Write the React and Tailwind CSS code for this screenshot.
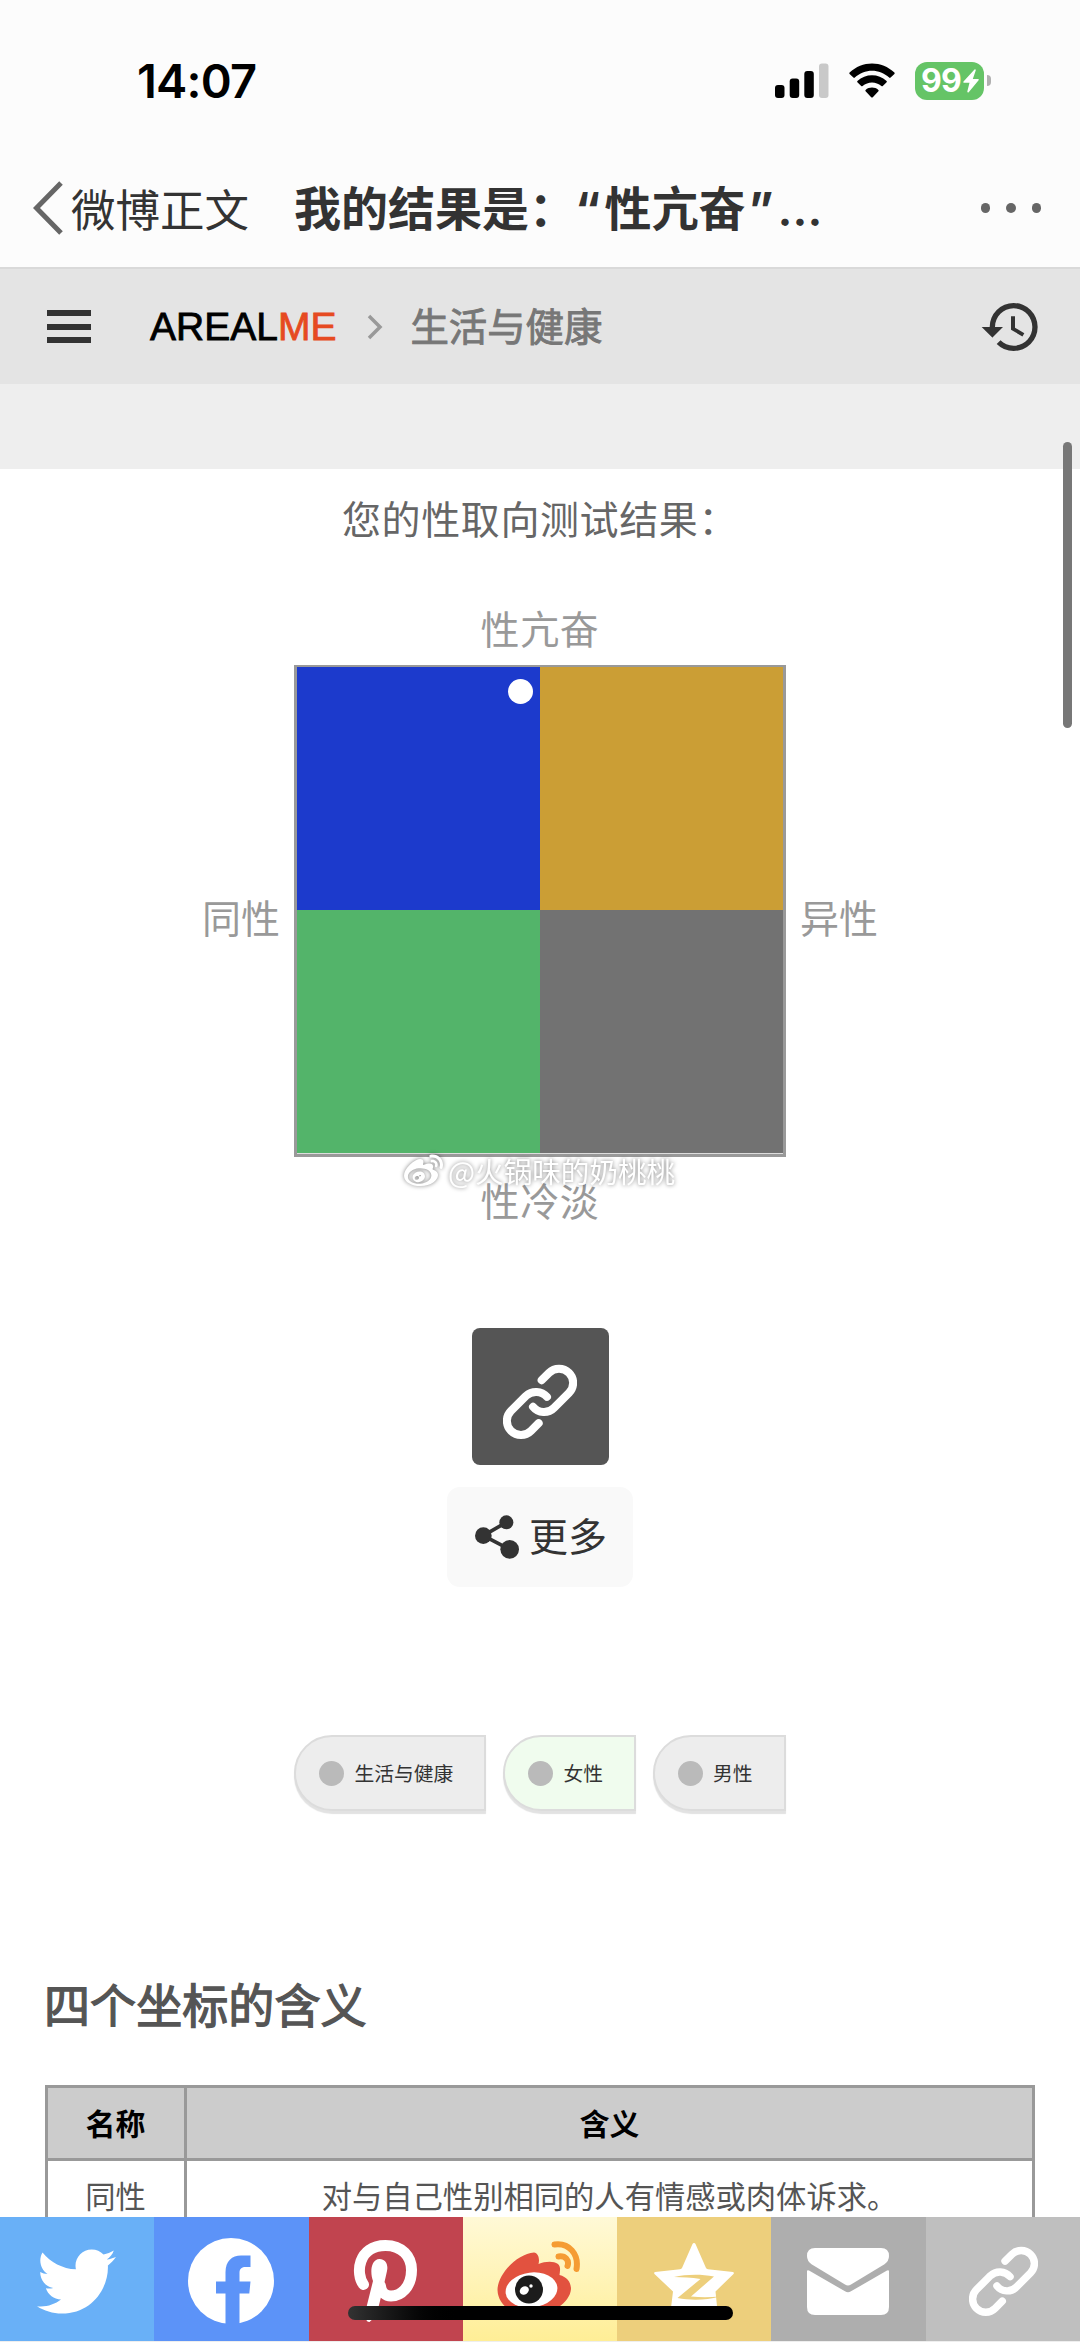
import { FaTwitter, FaWeibo } from "react-icons/fa";
import { MdHistory } from "react-icons/md";

const tags = [
  { label: "生活与健康", bg: "bg-[#ededed]" },
  { label: "女性", bg: "bg-[#f0fcee]" },
  { label: "男性", bg: "bg-[#ededed]" },
];

const rows = [{ name: "同性", meaning: "对与自己性别相同的人有情感或肉体诉求。" }];

function SignalIcon() {
  return (
    <svg width="54" height="36" viewBox="0 0 54 36">
      <rect x="0" y="22" width="9.5" height="13" rx="3" />
      <rect x="14.7" y="15.5" width="9.5" height="19.5" rx="3" />
      <rect x="29.3" y="8" width="9.5" height="27" rx="3" />
      <rect x="44" y="0.5" width="9.5" height="34.5" rx="3" fill="#c9c9c9" />
    </svg>
  );
}

function WifiIcon() {
  return (
    <svg width="46" height="36" viewBox="0 0 46 36">
      <path d="M0.6 9.6 C13 -2.6 33 -2.6 45.4 9.6 Q46 10.4 45.4 11 L41.6 14.6 Q40.9 15.2 40.2 14.6 C30.5 5.4 15.5 5.4 5.8 14.6 Q5.1 15.2 4.4 14.6 L0.6 11 Q0 10.4 0.6 9.6Z" />
      <path d="M8.4 18 C16.5 10.3 29.5 10.3 37.6 18 Q38.2 18.7 37.6 19.3 L33.8 22.9 Q33.1 23.5 32.4 22.9 C27 18.2 19 18.2 13.6 22.9 Q12.9 23.5 12.2 22.9 L8.4 19.3 Q7.8 18.7 8.4 18Z" />
      <path d="M16.6 27 C20 23.8 26 23.8 29.4 27 Q30 27.7 29.4 28.3 L23.8 34.2 Q23 35 22.2 34.2 L16.6 28.3 Q16 27.7 16.6 27Z" />
    </svg>
  );
}

function BoltIcon() {
  return (
    <svg width="16" height="24" viewBox="0 0 16 24" fill="#fff">
      <path d="M11.5 0.5 L0.5 12.5 Q0 13.8 1.2 13.8 H6.5 L4.3 22.5 Q4.5 24 5.7 23.2 L15.6 11.3 Q16.3 10 15 10 H9.8 L12.8 1.3 Q12.6 -0.3 11.5 0.5Z" />
    </svg>
  );
}

function LinkIcon({ className }) {
  return (
    <svg
      className={className}
      viewBox="0 0 222 224"
      fill="none"
      stroke="#fff"
      strokeWidth="24"
      strokeLinecap="round"
      strokeLinejoin="round"
    >
      <path d="M116 48 L138 26 A42 42 0 0 1 198 86 L153 131 A42 42 0 0 1 90 128" />
      <path d="M132 98 A44 44 0 0 0 69 95 L24 140 A42 42 0 0 0 84 200 L107 177" />
    </svg>
  );
}

function ShareIcon() {
  return (
    <svg width="44" height="44" viewBox="0 0 132 130" fill="#333">
      <path d="M25 61 L94 21 M25 61 L104 102" stroke="#333" strokeWidth="11" />
      <circle cx="25" cy="61" r="25" />
      <circle cx="94" cy="21" r="21" />
      <circle cx="104" cy="102" r="28" />
    </svg>
  );
}

function FacebookIcon() {
  return (
    <svg width="86" height="86" viewBox="0 0 86 86">
      <circle cx="43" cy="43" r="43" fill="#fff" />
      <path
        d="M37.5 86 V55.5 H28 V43.5 H37.5 V34 C37.5 23 44 17.5 53 17.5 H62.5 V29 H57.5 C53 29 51.5 31.5 51.5 35 V43.5 H62.5 L61.3 55.5 H51.5 V86Z"
        fill="#5c93f8"
      />
    </svg>
  );
}

function PinterestIcon() {
  return (
    <svg width="64" height="82" viewBox="0 0 64 82">
      <path
        d="M10.5 44.5 C2.5 34 4.5 5.5 32.5 5.5 C49 5.5 58.5 16.5 58.5 30 C58.5 47 48 56 38 56 C32.5 56 28 52 27.5 46"
        fill="none"
        stroke="#fff"
        strokeWidth="11"
        strokeLinecap="round"
      />
      <path
        d="M26.5 19 C32.5 19 35.5 24.5 34 31 L29.5 51 L25 69 C23 75 20.5 79 16.5 82 Q13.5 82 13.2 79 C12.6 74 13 70 14 65 L20 41 C17 33 17.5 19.5 26.5 19Z"
        fill="#fff"
      />
    </svg>
  );
}

function WeiboIcon() {
  return (
    <svg width="84" height="80" viewBox="0 0 84 80">
      <path
        d="M0.5 49 C0.5 33 20 13 37 11.5 C41 12 43 17 41.5 23 C48 20.5 56 19.5 61 23 C64 26 63 30 62.5 34 C70 36 74 41 74 48 C73 62 54 74 34 74 C15 74 1 64 0.5 49Z"
        fill="#e2523f"
      />
      <ellipse cx="34.5" cy="49" rx="26" ry="17.5" transform="rotate(-7 34.5 49)" fill="#fff" />
      <circle cx="32" cy="48.5" r="14" fill="#1c1c1c" />
      <ellipse cx="27.3" cy="49.5" rx="4.8" ry="4" transform="rotate(-35 27.3 49.5)" fill="#fff" />
      <circle cx="34" cy="45" r="1.7" fill="#fff" />
      <path
        d="M57.5 3.5 C72 1.5 82 13 79.5 28 M61.5 15.5 C68.5 14.5 72.5 19.5 70.5 25"
        fill="none"
        stroke="#f59c33"
        strokeWidth="6"
        strokeLinecap="round"
      />
    </svg>
  );
}

function QzoneIcon() {
  return (
    <svg width="80" height="76" viewBox="0 0 80 76">
      <path
        d="M40 0 Q41 0 41.5 1 L52 25 Q52.5 26 54 26.3 L79 29 Q80.5 29.5 79.5 31 L61.5 48.5 L64 73 Q64 75 62 74.5 L40 65 L18 74.5 Q16 75 16 73 L19 48.5 L0.5 31 Q-0.5 29.5 1 29 L26 26.3 Q27.5 26 28 25 L38.5 1 Q39 0 40 0Z"
        fill="#fff"
      />
      <path
        d="M20 34 C32 31.5 46 31 60 33.5 L37 53.5 C47 54.5 57 54.3 65.5 53.5 C52 57.5 36 57.5 23.5 55 L46.5 36 C37 34.5 29 34.3 20 34Z"
        fill="#edcf7c"
      />
    </svg>
  );
}

function MailIcon() {
  return (
    <svg width="82" height="67" viewBox="0 0 82 67" fill="#fff">
      <path d="M8 0 H74 Q82 0 82 8 Q82 13 77.5 16.3 L44 36.5 Q41 38.5 38 36.5 L4.5 16.3 Q0 13 0 8 Q0 0 8 0Z" />
      <path d="M0 23.5 Q0 21.5 2 22.5 L38 43.3 Q41 45 44 43.3 L80 22.5 Q82 21.5 82 23.5 V59 Q82 67 74 67 H8 Q0 67 0 59Z" />
    </svg>
  );
}

const shareItems = [
  { name: "twitter", bg: "bg-[#69b0f7]", icon: <FaTwitter size={79} color="#fff" /> },
  { name: "facebook", bg: "bg-[#5c93f8]", icon: <FacebookIcon /> },
  { name: "pinterest", bg: "bg-[#c1444f]", icon: <PinterestIcon /> },
  { name: "weibo", bg: "bg-linear-to-b from-[#fff9d6] to-[#ffee96]", icon: <WeiboIcon /> },
  { name: "qzone", bg: "bg-[#edcf7c]", icon: <QzoneIcon /> },
  { name: "mail", bg: "bg-[#aeaeae]", icon: <MailIcon /> },
  { name: "link", bg: "bg-[#bfbfbf]", icon: <LinkIcon className="ml-[2px] h-[70px] w-[69px]" /> },
];

function StatusBar() {
  return (
    <div className="flex h-[161px] shrink-0 items-center justify-between pl-[137px] pr-[89px]">
      <span className="font-['Inter',sans-serif] text-[47px] leading-none font-semibold tracking-[-0.8px] text-black">
        14:07
      </span>
      <div className="flex items-center">
        <SignalIcon />
        <div className="ml-5">
          <WifiIcon />
        </div>
        <div className="ml-[20px] flex h-[38px] w-[69px] items-center rounded-[12px] bg-[#65c466] pl-[6px]">
          <span className="w-[42px] font-['Inter',sans-serif] text-[32px] leading-none font-bold tracking-[-0.8px] text-white">
            99
          </span>
          <BoltIcon />
        </div>
        <div className="ml-[3px] h-[11px] w-[4px] rounded-r-full bg-[#b0b0b0]" />
      </div>
    </div>
  );
}

function NavBar() {
  return (
    <div className="flex h-[108px] shrink-0 items-center border-b-2 border-[#d9d9d9] pb-[12px] pl-[33px] pr-[39px]">
      <svg width="31" height="54" viewBox="0 0 31 54" fill="none" stroke="#666" strokeWidth="5">
        <path d="M28 2 L3.5 27 L28 52" />
      </svg>
      <span className="ml-[7px] text-[44.5px] leading-none text-[#333]">微博正文</span>
      <span className="ml-[45px] font-['Inter','Noto_Sans_CJK_SC',sans-serif] text-[47px] leading-none font-bold whitespace-nowrap text-[#333]">
        我的结果是：
        <span className="-ml-px tracking-[4px]">“</span>
        性亢奋
        <span className="ml-[3px] font-bold tracking-[4px]">”</span>
        <span className="font-semibold tracking-[0.5px]">…</span>
      </span>
      <div className="ml-auto flex gap-[16px]">
        <i className="size-[9.5px] rounded-full bg-[#666]" />
        <i className="size-[9.5px] rounded-full bg-[#666]" />
        <i className="size-[9.5px] rounded-full bg-[#666]" />
      </div>
    </div>
  );
}

function SiteHeader() {
  return (
    <header className="flex h-[115px] shrink-0 items-center bg-[#e4e4e4] pl-[47px] pr-[37px]">
      <div className="flex w-[44px] flex-col gap-[7.5px]">
        <i className="h-[6px] bg-[#333]" />
        <i className="h-[6px] bg-[#333]" />
        <i className="h-[6px] bg-[#333]" />
      </div>
      <span className="ml-[59px] font-['Liberation_Sans',sans-serif] text-[39px] leading-none text-black [-webkit-text-stroke:0.8px]">
        AREAL<span className="text-[#e64a21]">ME</span>
      </span>
      <svg className="ml-[31px]" width="16" height="26" viewBox="0 0 16 26" fill="none" stroke="#999" strokeWidth="3.5">
        <path d="M2 2 L13 13 L2 24" />
      </svg>
      <span className="ml-[27px] pb-[4px] text-[38.4px] leading-none text-[#777] [-webkit-text-stroke:0.9px]">
        生活与健康
      </span>
      <MdHistory className="ml-auto" size={64} color="#333" />
    </header>
  );
}

function ResultChart() {
  return (
    <section className="relative flex flex-col items-center text-[39px] text-[#999]">
      <p className="mt-[18px] leading-[60px] tracking-[0.6px] text-[#666]">您的性取向测试结果：</p>
      <p className="mt-[55px] leading-[50px] tracking-[0.6px]">性亢奋</p>
      <div className="mt-[13px] flex items-center">
        <span className="w-[92px] pt-[10px] leading-[50px]">同性</span>
        <div className="relative grid size-[492px] grid-cols-2 grid-rows-[243px_1fr] border-3 border-t-2 border-[#999]">
          <div className="bg-[#1c3acc]" />
          <div className="bg-[#cb9e35]" />
          <div className="border-b border-[#ddd] bg-[#53b46a]" />
          <div className="border-b border-[#ddd] bg-[#727272]" />
          <i className="absolute top-[12px] left-[211px] size-[25px] rounded-full bg-white" />
        </div>
        <span className="w-[92px] pt-[10px] text-right leading-[50px]">异性</span>
      </div>
      <p className="mt-[17px] leading-[50px] tracking-[0.6px]">性冷淡</p>
      <div className="absolute top-[682px] left-[404px] flex items-center gap-[5px] text-white [filter:drop-shadow(0_0_2px_rgba(0,0,0,0.5))]">
        <FaWeibo size={39} />
        <span className="text-[28.6px] leading-[40px] whitespace-nowrap">@火锅味的奶桃桃</span>
      </div>
    </section>
  );
}

export default function App() {
  return (
    <div
      lang="zh-CN"
      className="relative flex h-[2342px] w-[1080px] flex-col overflow-hidden bg-white font-['Noto_Sans_CJK_SC',sans-serif]"
    >
      <div className="bg-[#fcfcfc]">
        <StatusBar />
        <NavBar />
      </div>
      <SiteHeader />
      <div className="h-[85px] shrink-0 bg-[#eee]" />

      <main className="min-h-0 flex-1 overflow-hidden">
        <ResultChart />

        <div className="mt-[104px] flex flex-col items-center">
          <button className="flex size-[137px] items-center justify-center rounded-[8px] bg-[#555] pt-[9px]">
            <LinkIcon className="h-[75px] w-[74px]" />
          </button>
          <button className="mt-[22px] flex h-[100px] w-[186px] items-center rounded-[13px] bg-[#f9f9f9] pl-[28px] text-[39px] leading-none text-[#333]">
            <ShareIcon />
            <span className="ml-[10px] pb-[5px]">更多</span>
          </button>
        </div>

        <div className="mt-[148px] flex justify-center gap-[17px]">
          {tags.map((tag) => (
            <div
              key={tag.label}
              className={`${tag.bg} flex h-[76px] items-center rounded-l-[38px] border-2 border-[#dcdcdc] pr-[31px] pl-[23px] shadow-[0_3px_1px_#e2e2e2]`}
            >
              <i className="size-[25px] rounded-full bg-[#bababa]" />
              <span className="ml-[10px] pb-px text-[19.8px] leading-none text-[#333]">{tag.label}</span>
            </div>
          ))}
        </div>

        <h2 className="mt-[162px] ml-[44px] text-[46.1px] leading-[60px] text-[#555] [-webkit-text-stroke:1.3px]">
          四个坐标的含义
        </h2>

        <table className="mt-[52px] ml-[45px] w-[990px] table-fixed border-collapse text-center text-[29.8px] leading-[44px]">
          <thead>
            <tr className="h-[73px] bg-[#ccc] text-black">
              <th className="w-[139px] border-3 border-[#999] pr-px pb-[3px] font-bold">名称</th>
              <th className="border-3 border-[#999] pb-[3px] font-bold">含义</th>
            </tr>
          </thead>
          <tbody>
            {rows.map((row) => (
              <tr key={row.name} className="h-[73px] text-[30.3px] text-[#555]">
                <td className="border-3 border-[#999] pr-px pb-[3px]">{row.name}</td>
                <td className="border-3 border-[#999] pb-[3px]">{row.meaning}</td>
              </tr>
            ))}
          </tbody>
        </table>
      </main>

      <footer className="grid h-[125px] shrink-0 grid-cols-7 border-b border-[#eee]">
        {shareItems.map((item) => (
          <a key={item.name} className={`${item.bg} flex items-center justify-center pt-[4px] pr-px`}>
            {item.icon}
          </a>
        ))}
      </footer>

      {/* scrollbar + home indicator */}
      <div className="absolute top-[442px] right-[8px] h-[286px] w-[9px] rounded-full bg-[#777]" />
      <div className="absolute top-[2306px] left-[348px] h-[14px] w-[385px] rounded-full bg-linear-to-r from-[#333] via-black via-30% to-black" />
    </div>
  );
}
